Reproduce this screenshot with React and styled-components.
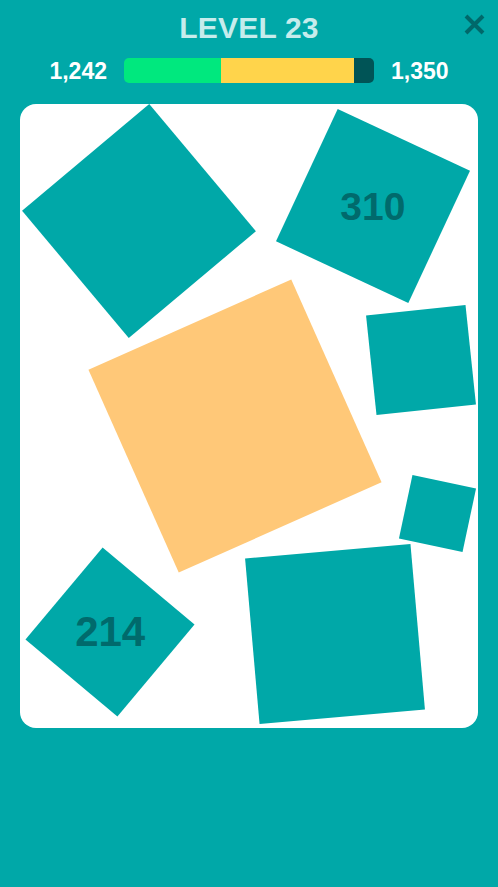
import React from 'react';
import styled, { createGlobalStyle } from 'styled-components';

const GlobalStyle = createGlobalStyle`
  html, body {
    margin: 0;
    padding: 0;
    background: #00a8a8;
  }
  body {
    font-family: "Liberation Sans", Arial, sans-serif;
  }
`;

const pieces = [
  { x: 119.2, y: 117.1, size: 166, rot: -40 },
  { x: 352.8, y: 102.1, size: 146, rot: 25, label: '310', fontSize: 39 },
  { x: 401, y: 256, size: 100, rot: -6 },
  { x: 417.8, y: 409.8, size: 65, rot: 12 },
  { x: 90.2, y: 528, size: 120, rot: -50, label: '214', fontSize: 42 },
  { x: 315.4, y: 530.4, size: 166, rot: -5 },
  { x: 215.25, y: 321.75, size: 222, rot: -24, active: true },
];

const App = () => {
  const best = 1242;
  const target = 1350;
  const score = 1242;

  return (
    <Page>
      <GlobalStyle />
      <Header>
        <Title>LEVEL 23</Title>
        <CloseButton aria-label="close">
          <svg width="21" height="21" viewBox="0 0 21 21">
            <path d="M2 2 L19 19 M19 2 L2 19" stroke="#00686a" strokeWidth="4" />
          </svg>
        </CloseButton>
      </Header>
      <ScoreRow>
        <Score align="end">{best.toLocaleString('en-US')}</Score>
        <Bar>
          <Segment color="#00e87e" style={{ width: '38.8%' }} />
          <Segment color="#ffd44b" style={{ width: `${(score / target) * 100 - 38.8}%` }} />
          <Segment color="#005456" grow />
        </Bar>
        <Score align="start">{target.toLocaleString('en-US')}</Score>
      </ScoreRow>
      <Board>
        {pieces.map((p, i) => (
          <Piece
            key={i}
            size={p.size}
            rot={p.rot}
            active={p.active}
            style={{ left: p.x - p.size / 2, top: p.y - p.size / 2 }}
          >
            {p.label && <Label size={p.fontSize}>{p.label}</Label>}
          </Piece>
        ))}
      </Board>
    </Page>
  );
};

const Page = styled.div`
  min-height: 887px;
  background: #00a8a8;
  padding-top: 13px;
  box-sizing: border-box;
  overflow: hidden;
`;

const Header = styled.div`
  position: relative;
  display: flex;
  justify-content: center;
`;

const Title = styled.div`
  font-size: 30px;
  line-height: 30px;
  font-weight: bold;
  color: #c6ecec;
  letter-spacing: 0.2px;
`;

const CloseButton = styled.div`
  position: absolute;
  top: 1px;
  right: 13px;
  width: 21px;
  height: 21px;
  display: flex;
`;

const ScoreRow = styled.div`
  margin-top: 15px;
  display: grid;
  grid-template-columns: 1fr 250px 1fr;
  column-gap: 17px;
  align-items: center;
  height: 25px;
`;

const Score = styled.div`
  justify-self: ${(props) => props.align};
  font-size: 23px;
  font-weight: bold;
  color: #ffffff;
  line-height: 1;
  padding-top: 1px;
`;

const Bar = styled.div`
  display: flex;
  height: 25px;
  border-radius: 5px;
  overflow: hidden;
`;

const Segment = styled.div`
  background: ${(props) => props.color};
  flex: ${(props) => (props.grow ? 1 : 'none')};
`;

const Board = styled.div`
  position: relative;
  margin: 21px 20px 0;
  height: 624px;
  background: #ffffff;
  border-radius: 16px;
  overflow: hidden;
`;

const Piece = styled.div`
  position: absolute;
  width: ${(props) => props.size}px;
  height: ${(props) => props.size}px;
  display: flex;
  align-items: center;
  justify-content: center;
  &::before {
    content: '';
    position: absolute;
    inset: 0;
    background: ${(props) => (props.active ? '#ffc878' : '#00a8a8')};
    transform: rotate(${(props) => props.rot}deg);
  }
`;

const Label = styled.span`
  position: relative;
  font-size: ${(props) => props.size}px;
  font-weight: bold;
  color: #006a6c;
  line-height: 1;
`;

export default App;
